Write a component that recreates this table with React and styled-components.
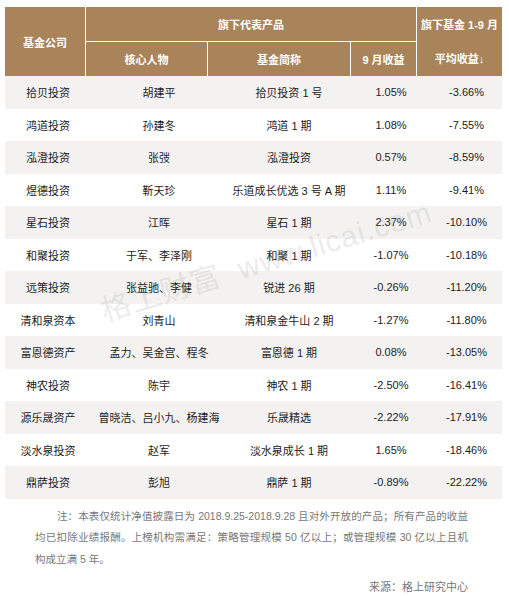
import React from 'react';
import styled, { createGlobalStyle } from 'styled-components';

const rows = [
  ['拾贝投资', '胡建平', '拾贝投资 1 号', '1.05%', '-3.66%'],
  ['鸿道投资', '孙建冬', '鸿道 1 期', '1.08%', '-7.55%'],
  ['泓澄投资', '张弢', '泓澄投资', '0.57%', '-8.59%'],
  ['煜德投资', '靳天珍', '乐道成长优选 3 号 A 期', '1.11%', '-9.41%'],
  ['星石投资', '江晖', '星石 1 期', '2.37%', '-10.10%'],
  ['和聚投资', '于军、李泽刚', '和聚 1 期', '-1.07%', '-10.18%'],
  ['远策投资', '张益驰、李健', '锐进 26 期', '-0.26%', '-11.20%'],
  ['清和泉资本', '刘青山', '清和泉金牛山 2 期', '-1.27%', '-11.80%'],
  ['富恩德资产', '孟力、吴金宫、程冬', '富恩德 1 期', '0.08%', '-13.05%'],
  ['神农投资', '陈宇', '神农 1 期', '-2.50%', '-16.41%'],
  ['源乐晟资产', '曾晓洁、吕小九、杨建海', '乐晟精选', '-2.22%', '-17.91%'],
  ['淡水泉投资', '赵军', '淡水泉成长 1 期', '1.65%', '-18.46%'],
  ['鼎萨投资', '彭旭', '鼎萨 1 期', '-0.89%', '-22.22%'],
];

const App = () => {
  return (
    <>
      <GlobalStyle />
      <Page>
        <TableWrap>
          <Head>
            <HeadCell $rows={2}>基金公司</HeadCell>
            <HeadCell $cols={3}>旗下代表产品</HeadCell>
            <HeadCell $rows={2} $twoLine>
              旗下基金 1-9 月
              <br />
              平均收益↓
            </HeadCell>
            <HeadCell>核心人物</HeadCell>
            <HeadCell>基金简称</HeadCell>
            <HeadCell>9 月收益</HeadCell>
          </Head>
          <Body>
            {rows.map((r, i) => (
              <Row key={r[0]} $grey={i % 2 === 0}>
                {r.map((c, j) => (
                  <Cell key={j}>{c}</Cell>
                ))}
              </Row>
            ))}
          </Body>
          <Watermark>
            格上财富&nbsp;&nbsp;www.licai.com
          </Watermark>
        </TableWrap>
        <Note>
          <NoteLine $first $full>
            注：本表仅统计净值披露日为 2018.9.25-2018.9.28 且对外开放的产品；所有产品的收益
          </NoteLine>
          <NoteLine $full>
            均已扣除业绩报酬。上榜机构需满足：策略管理规模 50 亿以上；或管理规模 30 亿以上且机
          </NoteLine>
          <NoteLine>构成立满 5 年。</NoteLine>
        </Note>
        <Source>来源：格上研究中心</Source>
      </Page>
    </>
  );
};

export default App;

const GlobalStyle = createGlobalStyle`
  body {
    margin: 0;
    background: #fff;
    font-family: "Liberation Sans", "Noto Sans CJK SC", sans-serif;
  }
`;

const Page = styled.div`
  width: 509px;
  padding: 7px 0 0 5px;
  box-sizing: border-box;
`;

const TableWrap = styled.div`
  position: relative;
  width: 497px;
  overflow: hidden;
`;

const Head = styled.div`
  display: grid;
  grid-template-columns: 80px 121px 142px 65px 85px;
  grid-template-rows: 34px 34px;
  gap: 1px;
  background: #fff;
`;

const HeadCell = styled.div`
  grid-row: span ${(p) => p.$rows || 1};
  grid-column: span ${(p) => p.$cols || 1};
  background: #a9845a;
  color: #fff;
  font-size: 11px;
  font-weight: bold;
  display: flex;
  align-items: center;
  justify-content: center;
  text-align: center;
  line-height: ${(p) => (p.$twoLine ? '34px' : 'normal')};
`;

const Body = styled.div`
  display: flex;
  flex-direction: column;
`;

const Row = styled.div`
  display: grid;
  grid-template-columns: 86px 136px 124px 80px 71px;
  height: 32.5px;
  align-items: center;
  background: ${(p) => (p.$grey ? '#f3f2f0' : '#fff')};
`;

const Cell = styled.div`
  text-align: center;
  font-size: 11px;
  color: #1c1c1c;
  white-space: nowrap;
`;

const Watermark = styled.div`
  position: absolute;
  left: 96px;
  top: 280px;
  font-size: 30px;
  color: rgba(110, 110, 110, 0.15);
  transform: rotate(-17deg);
  transform-origin: left center;
  white-space: nowrap;
  pointer-events: none;
  letter-spacing: 1px;
`;

const Note = styled.div`
  margin: 7px 0 0 30px;
  width: 433px;
  font-size: 10.5px;
  line-height: 21.5px;
  color: #777;
`;

const NoteLine = styled.div`
  white-space: nowrap;
  padding-left: ${(p) => (p.$first ? '22px' : '0')};
  text-align: ${(p) => (p.$full ? 'justify' : 'left')};
  text-align-last: ${(p) => (p.$full ? 'justify' : 'left')};
`;

const Source = styled.p`
  margin: 7px 0 0 0;
  width: 463px;
  text-align: right;
  font-size: 11px;
  line-height: 21.5px;
  color: #777;
`;
